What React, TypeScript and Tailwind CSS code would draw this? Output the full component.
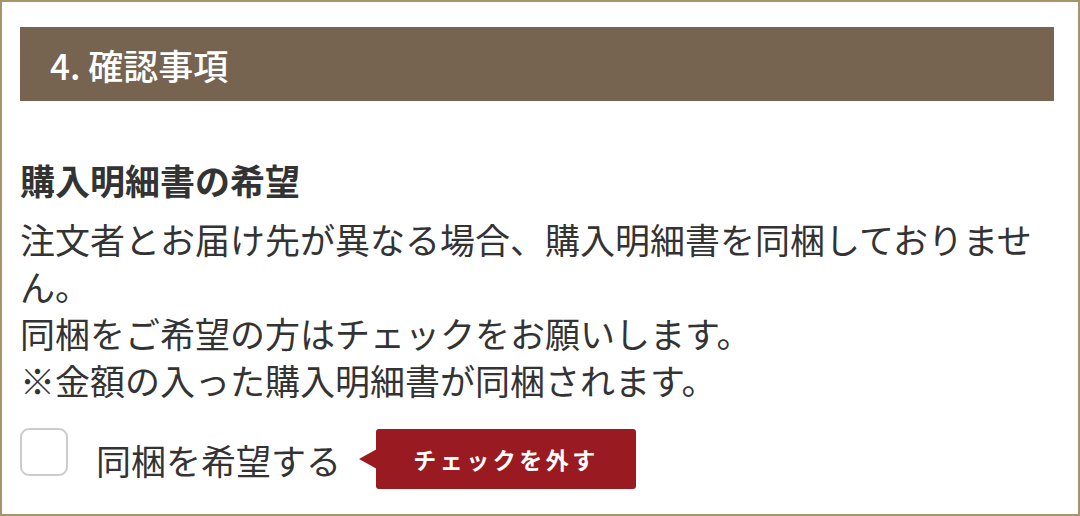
import React from "react";

export default function App() {
  return (
    <div
      className="w-[1080px] h-[516px] bg-white border-2 border-[#a8946a] pl-[18px] pr-[24px] pt-[25px] text-[#333333]"
      style={{ fontFamily: '"Noto Sans CJK JP", "Noto Sans", sans-serif' }}
    >
      <div className="h-[74px] bg-[#766350] flex items-center pl-[30px]">
        <h2 className="text-white text-[35px] leading-none font-medium">4. 確認事項</h2>
      </div>
      <div className="pt-[56px]">
        <h3 className="text-[35px] leading-[46px] font-bold">購入明細書の希望</h3>
        <p className="mt-[12px] text-[35px] leading-[47px]">
          注文者とお届け先が異なる場合、購入明細書を同梱しておりません。
          <br />
          同梱をご希望の方はチェックをお願いします。
          <br />
          ※金額の入った購入明細書が同梱されます。
        </p>
        <div className="mt-[26px] flex items-center">
          <div className="self-start -mt-[1px] w-[48px] h-[48px] rounded-[9px] border-2 border-[#cccccc] bg-white" />
          <span className="ml-[28px] text-[35px] leading-none">同梱を希望する</span>
          <div className="ml-[35px] relative">
            <div className="absolute left-[-17px] top-1/2 -translate-y-1/2 w-0 h-0 border-y-[10px] border-y-transparent border-r-[18px] border-r-[#9a1a21]" />
            <div className="w-[260px] h-[60px] bg-[#9a1a21] rounded-[3px] flex items-center justify-center text-white text-[23px] font-bold tracking-[3.5px]">
              チェックを外す
            </div>
          </div>
        </div>
      </div>
    </div>
  );
}
